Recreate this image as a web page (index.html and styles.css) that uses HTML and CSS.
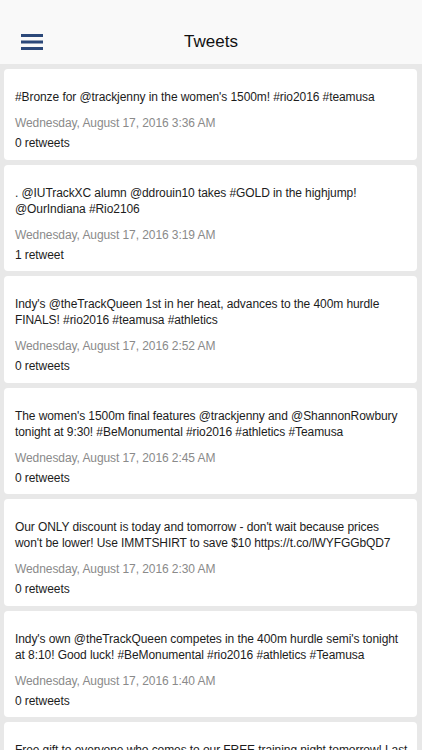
FILE: index.html
```html
<!DOCTYPE html>
<html lang="en">
<head>
  <meta charset="UTF-8" />
  <title>Tweets</title>
  <link rel="stylesheet" href="styles.css">
</head>
<body>

  <header class="topbar">
    <button class="menu-btn" aria-label="Menu">
      <svg width="22" height="16" viewBox="0 0 22 16">
        <rect x="0" y="0" width="22" height="3" fill="#2b4879"/>
        <rect x="0" y="6.5" width="22" height="3" fill="#2b4879"/>
        <rect x="0" y="13" width="22" height="3" fill="#2b4879"/>
      </svg>
    </button>
    <h1>Tweets</h1>
  </header>

  <main class="feed">
    <div class="tweet">
      <p class="text">#Bronze for @trackjenny in the women's 1500m! #rio2016 #teamusa</p>
      <p class="date">Wednesday, August 17, 2016 3:36 AM</p>
      <p class="rt">0 retweets</p>
    </div>
    <div class="tweet">
      <p class="text">. @IUTrackXC alumn @ddrouin10 takes #GOLD in the highjump! @OurIndiana #Rio2106</p>
      <p class="date">Wednesday, August 17, 2016 3:19 AM</p>
      <p class="rt">1 retweet</p>
    </div>
    <div class="tweet">
      <p class="text">Indy's @theTrackQueen 1st in her heat, advances to the 400m hurdle FINALS! #rio2016 #teamusa #athletics</p>
      <p class="date">Wednesday, August 17, 2016 2:52 AM</p>
      <p class="rt">0 retweets</p>
    </div>
    <div class="tweet">
      <p class="text">The women's 1500m final features @trackjenny and @ShannonRowbury tonight at 9:30! #BeMonumental #rio2016 #athletics #Teamusa</p>
      <p class="date">Wednesday, August 17, 2016 2:45 AM</p>
      <p class="rt">0 retweets</p>
    </div>
    <div class="tweet">
      <p class="text">Our ONLY discount is today and tomorrow - don't wait because prices won't be lower! Use IMMTSHIRT to save $10 https://t.co/lWYFGGbQD7</p>
      <p class="date">Wednesday, August 17, 2016 2:30 AM</p>
      <p class="rt">0 retweets</p>
    </div>
    <div class="tweet">
      <p class="text">Indy's own @theTrackQueen competes in the 400m hurdle semi's tonight at 8:10! Good luck! #BeMonumental #rio2016 #athletics #Teamusa</p>
      <p class="date">Wednesday, August 17, 2016 1:40 AM</p>
      <p class="rt">0 retweets</p>
    </div>
    <div class="tweet">
      <p class="text">Free gift to everyone who comes to our FREE training night tomorrow! Last chance to train with us before the big race!</p>
      <p class="date">Tuesday, August 16, 2016 9:12 PM</p>
      <p class="rt">0 retweets</p>
    </div>
  </main>

</body>
</html>
```

FILE: styles.css
```css
body {
  font-family: 'Liberation Sans', Arial, sans-serif;
  background: #e8e8e8;
  margin: 0;
  padding: 0;
  color: #1c1c1c;
}
.topbar {
  background: #f9f9f9;
  height: 44px;
  padding-top: 20px;
  display: flex;
  align-items: center;
  justify-content: center;
  position: relative;
}
.topbar h1 {
  margin: 0;
  font-size: 17px;
  font-weight: normal;
  color: #111;
}
.menu-btn {
  position: absolute;
  left: 21px;
  top: 34px;
  background: none;
  border: none;
  padding: 0;
  line-height: 0;
}
.feed {
  padding: 5px 5px 0 4px;
  display: flex;
  flex-direction: column;
  gap: 5px;
}
.tweet {
  background: white;
  border-radius: 4px;
  padding: 20px 8px 8.5px 11px;
  font-size: 12px;
  line-height: 16px;
  letter-spacing: -0.08px;
}
.tweet p {
  margin: 0;
}
.date {
  color: #8a8a8a;
  margin-top: 10px !important;
}
.rt {
  margin-top: 4px !important;
}
```
